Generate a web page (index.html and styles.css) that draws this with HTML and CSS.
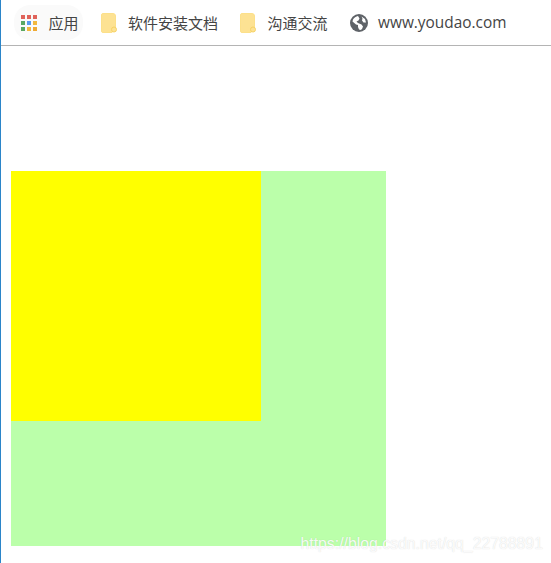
FILE: index.html
```html
<!DOCTYPE html>
<html>
<head>
    <title>Bookmarks</title>
    <link rel="stylesheet" href="styles.css">
</head>
<body>
    <header class="bookmarks">
        <a class="bookmark apps" href="#">
            <svg class="icon" width="18" height="18" viewBox="0 0 18 18">
                <rect x="1" y="1" width="4" height="4" fill="#e0635a"/>
                <rect x="7" y="1" width="4" height="4" fill="#e0635a"/>
                <rect x="13" y="1" width="4" height="4" fill="#e0635a"/>
                <rect x="1" y="7" width="4" height="4" fill="#5aa862"/>
                <rect x="7" y="7" width="4" height="4" fill="#5a9bf0"/>
                <rect x="13" y="7" width="4" height="4" fill="#f2b83e"/>
                <rect x="1" y="13" width="4" height="4" fill="#5aa862"/>
                <rect x="7" y="13" width="4" height="4" fill="#f2b83e"/>
                <rect x="13" y="13" width="4" height="4" fill="#efaa35"/>
            </svg>
            应用
        </a>
        <a class="bookmark" href="#">
            <svg class="icon" width="16" height="20" viewBox="0 0 16 20">
                <path d="M2 0.5H12Q14.5 0.5 14.5 3V14.5L11 19.5H2Q0.5 19.5 0.5 18V2Q0.5 0.5 2 0.5Z" fill="#fde293" stroke="#fce08a"/>
                <circle cx="13" cy="16.5" r="2.5" fill="#fde293" stroke="#f7d265"/>
            </svg>
            软件安装文档
        </a>
        <a class="bookmark" href="#">
            <svg class="icon" width="16" height="20" viewBox="0 0 16 20">
                <path d="M2 0.5H12Q14.5 0.5 14.5 3V14.5L11 19.5H2Q0.5 19.5 0.5 18V2Q0.5 0.5 2 0.5Z" fill="#fde293" stroke="#fce08a"/>
                <circle cx="13" cy="16.5" r="2.5" fill="#fde293" stroke="#f7d265"/>
            </svg>
            沟通交流
        </a>
        <a class="bookmark site" href="#">
            <svg class="icon" width="18" height="18" viewBox="0 0 18 18">
                <circle cx="9" cy="9" r="9" fill="#5f6368"/>
                <path d="M8 2C6 2.4 4 3.5 3 5.5L2.5 7.5L6 10.5L8 11V13L9 15.5L10.5 16C12 15.5 12.5 14 13 12.5L11.5 10.5L8 9L6.5 7.5L8.5 6.5L9.5 4.5Z" fill="#fff"/>
                <path d="M11.5 2.5L15 5L16 8.5H13.5L12 6.5L12.5 4.5Z" fill="#fff"/>
            </svg>
            www.youdao.com
        </a>
    </header>

    <div class="content">
        <div class="outer">
            <div class="inner"></div>
        </div>
    </div>

    <div class="watermark">https://blog.csdn.net/qq_22788891</div>
</body>
</html>
```

FILE: styles.css
```css
html, body {
    height: 100%;
}

body {
    margin: 0;
    background-color: #fff;
    border-left: 1.5px solid #2b85c9;
    box-sizing: border-box;
    font-family: "Open Sans", "Noto Sans CJK SC", sans-serif;
    overflow: hidden;
    position: relative;
}

.bookmarks {
    display: flex;
    align-items: center;
    gap: 22px;
    height: 46px;
    box-sizing: border-box;
    padding: 0 0 0 18.5px;
    border-bottom: 1px solid #b4b4b4;
}

.bookmark {
    display: flex;
    align-items: center;
    gap: 11.5px;
    color: #444;
    font-size: 15px;
    text-decoration: none;
    white-space: nowrap;
}

.apps {
    gap: 11px;
    margin-left: -6px;
    padding: 7px 4px 7px 6px;
    margin-right: -4px;
    background-color: #fafafa;
    border-radius: 16px;
}

.site {
    gap: 10.5px;
    font-size: 15.4px;
}

.icon {
    flex: none;
}

.content {
    padding: 125px 0 0 9.5px;
}

.outer {
    width: 375px;
    height: 375px;
    background-color: #bbffaa;
}

.inner {
    width: 250px;
    height: 250px;
    background-color: #ffff00;
}

.watermark {
    position: absolute;
    left: 299.5px;
    top: 535px;
    color: rgba(255, 255, 255, 0.9);
    font-family: "Liberation Sans", sans-serif;
    font-size: 15.8px;
    text-shadow: 0 0 1px rgba(120, 120, 120, 0.3);
    white-space: nowrap;
}
```
